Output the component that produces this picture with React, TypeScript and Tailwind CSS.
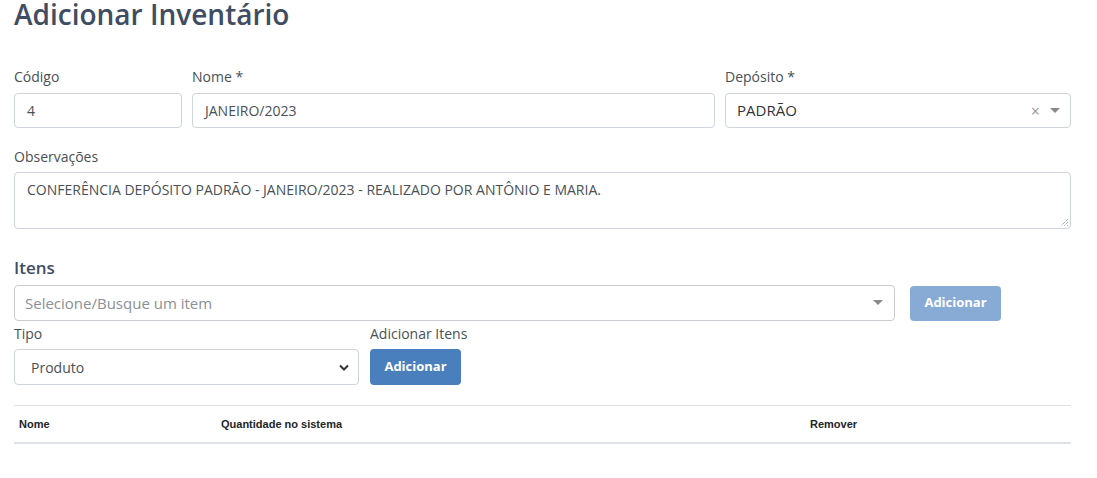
import React from "react";

const font = { fontFamily: '"Open Sans", "Noto Sans", sans-serif' };

export default function App() {
  return (
    <div className="bg-white w-[1097px] h-[478px] overflow-hidden text-[#495057]" style={font}>
      <div className="ml-[14px] w-[1057px]">
        <h1 className="text-[28px] leading-[30px] font-semibold text-[#3f4d62] -mt-[1px]">Adicionar Inventário</h1>

        <div className="grid grid-cols-[168px_523px_346px] gap-x-[10px] mt-[38px]">
          <div className="flex flex-col">
            <label className="text-[14px] leading-[20px] text-[#495057] mb-[6px]">Código</label>
            <div className="h-[35px] border border-[#ced4da] rounded-[4px] flex items-center px-[12px] text-[14px]">4</div>
          </div>
          <div className="flex flex-col">
            <label className="text-[14px] leading-[20px] text-[#495057] mb-[6px]">Nome *</label>
            <div className="h-[35px] border border-[#ced4da] rounded-[4px] flex items-center px-[12px] text-[14px]">JANEIRO/2023</div>
          </div>
          <div className="flex flex-col">
            <label className="text-[14px] leading-[20px] text-[#495057] mb-[6px]">Depósito *</label>
            <div className="h-[35px] border border-[#ced4da] rounded-[4px] flex items-center pl-[11px] pr-[10px] text-[15px] text-[#333]">
              <span className="flex-1">PADRÃO</span>
              <span className="text-[#999] text-[16px] mr-[10px] leading-none">×</span>
              <svg width="10" height="6" viewBox="0 0 10 6"><path d="M0 0h10L5 5z" fill="#888" /></svg>
            </div>
          </div>
        </div>

        <div className="flex flex-col mt-[19px]">
          <label className="text-[14px] leading-[20px] text-[#495057] mb-[5px]">Observações</label>
          <div className="relative h-[57px] border border-[#ced4da] rounded-[4px] px-[12px] pt-[7px] text-[14px] leading-[20px]">
            CONFERÊNCIA DEPÓSITO PADRÃO - JANEIRO/2023 - REALIZADO POR ANTÔNIO E MARIA.
            <svg className="absolute right-[1px] bottom-[1px]" width="9" height="9" viewBox="0 0 9 9">
              <path d="M8 1L1 8M8 4L4 8M8 7L7 8" stroke="#888" strokeWidth="1" strokeDasharray="1 1" />
            </svg>
          </div>
        </div>

        <h2 className="text-[17px] leading-[22px] font-semibold text-[#3f4d62] mt-[28px]">Itens</h2>
        <div className="flex items-center mt-[6px]">
          <div className="w-[881px] h-[36px] border border-[#c9ccd1] rounded-[4px] flex items-center pl-[10px] pr-[11px] text-[15px] text-[#8a8f96]">
            <span className="flex-1">Selecione/Busque um item</span>
            <svg width="10" height="6" viewBox="0 0 10 6"><path d="M0 0h10L5 5z" fill="#888" /></svg>
          </div>
          <button className="ml-[15px] w-[91px] h-[35px] rounded-[4px] bg-[#88abd6] text-white text-[13px] font-bold">Adicionar</button>
        </div>

        <div className="flex gap-x-[11px] mt-[3px]">
          <div className="flex flex-col w-[345px]">
            <label className="text-[14px] leading-[20px] text-[#495057] mb-[5px]">Tipo</label>
            <div className="h-[36px] border border-[#ced4da] rounded-[4px] flex items-center pl-[16px] pr-[9px] text-[14px] text-[#495057]">
              <span className="flex-1">Produto</span>
              <svg width="10" height="7" viewBox="0 0 10 7"><path d="M1 1.5l4 4 4-4" stroke="#333" strokeWidth="2" fill="none" /></svg>
            </div>
          </div>
          <div className="flex flex-col">
            <label className="text-[14px] leading-[20px] text-[#495057] mb-[5px]">Adicionar Itens</label>
            <button className="w-[91px] h-[36px] rounded-[4px] bg-[#4a7fbd] text-white text-[13px] font-bold">Adicionar</button>
          </div>
        </div>

        <div className="mt-[20px] border-t border-[#dee2e6] border-b-2 border-b-[#dee2e6] h-[39px] flex items-center text-[11px] font-bold text-[#212529]" style={{ fontFamily: '"Liberation Sans", Arial, sans-serif' }}>
          <span className="w-[207px] pl-[5px]">Nome</span>
          <span className="w-[589px]">Quantidade no sistema</span>
          <span>Remover</span>
        </div>
      </div>
    </div>
  );
}
